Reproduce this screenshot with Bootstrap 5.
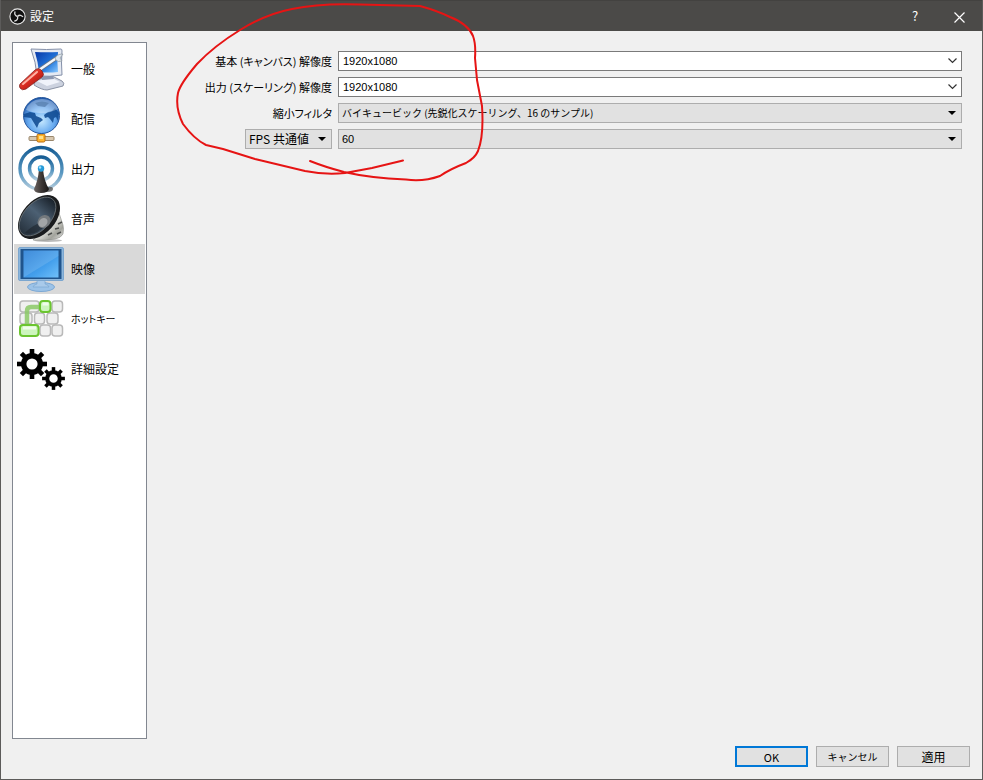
<!DOCTYPE html>
<html lang="ja">
<head>
<meta charset="utf-8">
<meta name="viewport" content="width=device-width, initial-scale=1">
<title>設定</title>
<link rel="stylesheet" href="https://cdn.jsdelivr.net/npm/bootstrap@5.3.0/dist/css/bootstrap.min.css">
<style>
  body { font: 12px/16px "Noto Sans CJK JP", sans-serif; font-feature-settings: "palt"; color: #000; background: #f0f0f0; }
  .window { border: 1px solid #5c5b5a; border-top-width: 0; }
  .titlebar { height: 31px; background: #4b4a48; color: #fff; padding: 0 7px 0 8px; border-top: 1px solid #434240; }
  .title-btn { width: 32px; height: 30px; color: #fff; background: none; border: 0; padding: 0; font-size: 13px; }
  .content-area { padding: 11px 20px 7px 11px; }
  .side { width: 135px; background: #fff; border: 1px solid #828790; padding: 1px; }
  .side .nav-link { height: 50px; padding: 0 0 0 3px; color: #000; border-radius: 0; gap: 6px; font-size: 12px; }
  .side .nav-link.active { background: #d9d9d9; color: #000; }
  .side svg { width: 48px; height: 48px; flex: none; }
  .kana { font-size: 10px; }
  .settings-grid { display: grid; grid-template-columns: 175px 1fr; gap: 6px; padding: 9px 0 0 10px; align-content: start; }
  .settings-grid > label { text-align: right; font-size: 11px; line-height: 20px; white-space: nowrap; }
  .combo { height: 20px; background: #fff; border: 1px solid #7a7a7a; }
  .combo input { border: 0; background: none; outline: 0; padding: 0 0 0 4px; font: 11px/16px "Liberation Sans", sans-serif; color: #000; }
  .combo button { border: 0; background: none; padding: 0; width: 17px; }
  .settings-grid .form-select { height: 20px; padding: 0 16px 0 3px; border: 1px solid #adadad; border-radius: 0; color: #000; font-size: 12px; line-height: 18px; background-color: #e1e1e1; background-size: 8px 4px; background-position: right 5px center;
    background-image: url("data:image/svg+xml,%3Csvg xmlns='http://www.w3.org/2000/svg' viewBox='0 0 8 4'%3E%3Cpath d='M0 0h8L4 4z'/%3E%3C/svg%3E"); }
  .settings-grid .fps-type { width: 87px; }
  .settings-grid .fps-value { font-family: "Liberation Sans", sans-serif; font-size: 11px; }
  .settings-grid .form-select.kana { font-size: 10px; }
  .actions { gap: 8px; padding: 0 12px 12px 0; }
  .actions .btn { width: 73px; height: 21px; padding: 0; border: 1px solid #adadad; border-radius: 0; background: #e1e1e1; color: #000; font-size: 12px; line-height: 18px; }
  .actions .btn.main { border: 2px solid #0078d7; line-height: 16px; font-size: 11px; }
  .actions .btn.kana { font-size: 10px; }
  .ink { position: absolute; left: 170px; top: 0; pointer-events: none; }
</style>
<script src="https://cdn.jsdelivr.net/npm/bootstrap@5.3.0/dist/js/bootstrap.bundle.min.js"></script>
</head>
<body>
<div class="window d-flex flex-column min-vh-100">
  <header class="titlebar d-flex align-items-center">
    <svg width="17" height="17" viewBox="0 0 17 17" aria-hidden="true"><circle cx="8.500" cy="8.500" r="7.600" fill="#111" stroke="#e8e8e8" stroke-width="1.100"/><g fill="none" stroke="#ddd" stroke-width="1.300"><path d="M8.500 8.500C6 8 5 5.500 6.200 3.500"/><path d="M8.500 8.500C6 8 5 5.500 6.200 3.500" transform="rotate(120 8.500 8.500)"/><path d="M8.500 8.500C6 8 5 5.500 6.200 3.500" transform="rotate(240 8.500 8.500)"/></g></svg>
    <span class="ms-1 me-auto">設定</span>
    <button type="button" class="title-btn me-2" aria-label="ヘルプ">?</button>
    <button type="button" class="title-btn ms-1" aria-label="閉じる"><svg width="11" height="11" viewBox="0 0 11 11"><path d="M.5.5l10 10M10.500.5l-10 10" stroke="#fff" stroke-width="1.200"/></svg></button>
  </header>

  <main class="content-area d-flex flex-grow-1">
    <nav class="side nav nav-pills flex-column flex-nowrap flex-shrink-0" aria-label="設定の種類">
      <a class="nav-link d-flex align-items-center" href="#general">
        <svg viewBox="0 0 48 48" aria-hidden="true"><defs><linearGradient id="scr" x2="1" y2="1"><stop stop-color="#0838a8"/><stop offset=".6" stop-color="#2378dc"/><stop offset="1" stop-color="#8bcaff"/></linearGradient><linearGradient id="red" x2="1" y2="1"><stop stop-color="#ff8a7a"/><stop offset=".5" stop-color="#d82a20"/><stop offset="1" stop-color="#8c100c"/></linearGradient></defs>
        <path d="M18 35l17-4 10 5q3 2 1 5l-16 4q-5 0-13-5z" fill="#ccd2df" stroke="#8b93a5"/><path d="M20 36l15-3 8 4-13 4z" fill="#f0f3fa"/><path d="M24 28h11l2 6-12 1z" fill="#8b97b0"/><path d="M14 4q16 1 30 0 1 0 1 2-1 12 0 24-12 2-25 1-1-14-6-27z" fill="#e4e9f2" stroke="#8490a9"/><path d="M18 7q12 .500 23 0-1 11 0 20-10 1-19 0-1-10-4-20z" fill="url(#scr)"/><path d="M22 25L41 12" stroke="#667588" stroke-width="4"/><path d="M22 25L41 12" stroke="#f5f7f9" stroke-width="2.400"/><path d="M38 14q1-5 8-5l-3 4 2 3q-4 2-7-2z" fill="#dde6ed" stroke="#8a949c" stroke-width=".7"/><path d="M3 39L18 25q4-3 7 1t0 6L9 44q-4 2-6-1-1-2 0-4z" fill="url(#red)" stroke="#84201e" stroke-width=".8"/><path d="M6 39L20 27" stroke="#ffb1a4" stroke-width="2" stroke-linecap="round"/></svg>
        <span>一般</span></a>
      <a class="nav-link d-flex align-items-center" href="#stream">
        <svg viewBox="0 0 48 48" aria-hidden="true"><defs><radialGradient id="sea" cx=".5" cy=".65" r=".65"><stop stop-color="#c6e9ff"/><stop offset=".55" stop-color="#67aaf0"/><stop offset="1" stop-color="#1851a4"/></radialGradient></defs>
        <path d="M24 35v8" stroke="#7a7f86" stroke-width="5"/><rect x="12" y="41.500" width="25" height="4" rx="1" fill="#d8c8b0" stroke="#99866b"/><rect x="20" y="39" width="8" height="8" rx="1.500" fill="#ffb52e" stroke="#b56a10"/><path d="M22 41h4v3h-4z" fill="#ffe08b"/><circle cx="24.500" cy="20.500" r="18" fill="url(#sea)" stroke="#27579c"/><path d="M18 8q7-3 14 0l-4 4-7-1zM7 19l6-2 5 1 1 3 5 2 2 2-4 3-2 5-3-5-3-5-7-1zM27 20l4-3 4-1 3-3 4 5-1 8-2-4-2 1-1 5-3-4-2-2-3 1z" fill="#124c94" opacity=".9"/><path d="M9 15Q12 5 24 4t17 10Q25 22 9 15z" fill="#fff" opacity=".32"/></svg>
        <span>配信</span></a>
      <a class="nav-link d-flex align-items-center" href="#output">
        <svg viewBox="0 0 48 48" aria-hidden="true"><defs><linearGradient id="wave" x2="0" y2="1"><stop stop-color="#175d94"/><stop offset=".6" stop-color="#5998c2"/><stop offset="1" stop-color="#b4ccdc"/></linearGradient><linearGradient id="mast"><stop stop-color="#6a6260"/><stop offset=".5" stop-color="#3c3735"/><stop offset="1" stop-color="#171514"/></linearGradient></defs><g fill="none" stroke="url(#wave)"><circle cx="24" cy="23.500" r="21" stroke-width="3.400"/><circle cx="24" cy="23.500" r="11.500" stroke-width="3.400"/></g><path d="M25 46l5-4q6-1 6 2t-6 3z" fill="#555" opacity=".8"/><path d="M22 24h4q1 12 6 20-1 4-8 4t-7-4q4-8 5-20z" fill="url(#mast)"/><circle cx="24" cy="23.500" r="3.200" fill="#279bd9"/><circle cx="23" cy="22.500" r="1.200" fill="#a5e2ff"/></svg>
        <span>出力</span></a>
      <a class="nav-link d-flex align-items-center" href="#audio">
        <svg viewBox="0 0 48 48" aria-hidden="true"><defs><linearGradient id="cone"><stop stop-color="#26313c"/><stop offset=".55" stop-color="#4c6073"/><stop offset="1" stop-color="#182029"/></linearGradient><linearGradient id="steel" x2="1" y2="1"><stop stop-color="#777"/><stop offset=".45" stop-color="#f1f1ec"/><stop offset=".75" stop-color="#a2a39c"/><stop offset="1" stop-color="#eee"/></linearGradient></defs><ellipse cx="31" cy="45.500" rx="14" ry="1.500" fill="#bbb"/><path d="M16 45L42 18l4 12q1 4 0 9-2 4-8 5-10 2-22 1z" fill="url(#steel)" stroke="#8a8c87" stroke-width=".6"/><path d="M41 29l4-2M38 34l4-1M31 40l4-2M40 39l4-2" stroke="#4a4c4a" stroke-width="1.600"/><ellipse cx="22" cy="22" rx="25.500" ry="16.500" transform="rotate(-48 22 22)" fill="#1a1c1e"/><ellipse cx="20.500" cy="21.500" rx="23" ry="13.500" transform="rotate(-48 20.500 21.500)" fill="url(#cone)" stroke="#6e7578" stroke-width=".8"/><path d="M22 28Q12 33 8 38q10 3 20-7z" fill="#171e24" opacity=".5"/><ellipse cx="27" cy="26.500" rx="7" ry="6" transform="rotate(-45 27 26.500)" fill="#74797d"/><ellipse cx="26" cy="27.500" rx="5" ry="4" transform="rotate(-45 26 27.500)" fill="#a2a5a7"/></svg>
        <span>音声</span></a>
      <a class="nav-link active d-flex align-items-center" href="#video" aria-current="page">
        <svg viewBox="0 0 48 48" aria-hidden="true"><defs><linearGradient id="lcd" x2="1" y2="1"><stop stop-color="#237bd5"/><stop offset=".6" stop-color="#449fec"/><stop offset="1" stop-color="#70c0fa"/></linearGradient></defs><ellipse cx="24" cy="42" rx="13.500" ry="4.500" fill="#9cc3e8" stroke="#7ca8d4"/><path d="M20 34h8v5q4 1 4 3H16q0-2 4-3z" fill="#a9caea" stroke="#76a2cd" stroke-width=".6"/><rect x="1.500" y="2.500" width="45" height="33" rx="1.500" fill="#8bb6dd" stroke="#7ba6cf"/><rect x="3.500" y="4" width="41" height="30" fill="#20548c"/><rect x="6.500" y="5.500" width="35" height="27" fill="url(#lcd)"/><path d="M6.500 32.500L41.500 11V5.500h-35z" fill="#fff" opacity=".13"/></svg>
        <span>映像</span></a>
      <a class="nav-link d-flex align-items-center" href="#hotkeys">
        <svg viewBox="0 0 48 48" aria-hidden="true"><g fill="#f0f0f0" stroke="#b9b9b9" stroke-width="1.500"><rect x="3" y="6" width="19" height="11" rx="3"/><rect x="35" y="6" width="10.500" height="11" rx="3"/><rect x="3" y="18" width="12" height="11" rx="3"/><rect x="17.500" y="18" width="10" height="11" rx="3"/><rect x="30" y="18" width="11" height="11" rx="3"/><rect x="23" y="30" width="10.500" height="11" rx="3"/><rect x="35" y="30" width="10.500" height="11" rx="3"/></g><path d="M10 31V16q0-4 4-4h11" fill="none" stroke="#8bc966" stroke-width="4.500" opacity=".85"/><g fill="#cdf5bd" stroke="#6bc52f" stroke-width="2"><rect x="23" y="6" width="10.500" height="11" rx="3"/><rect x="3" y="30" width="18.500" height="11" rx="3"/></g><path d="M6 33h13M25.500 9h6" stroke="#effdea" stroke-width="3"/></svg>
        <span class="kana">ホットキー</span></a>
      <a class="nav-link d-flex align-items-center" href="#advanced">
        <svg viewBox="0 0 48 48" aria-hidden="true"><defs><path id="tooth" d="M-2.300-15h4.600v6h-4.600z"/><g id="gear"><circle r="8.300" fill="none" stroke="#000" stroke-width="5.400"/><use href="#tooth"/><use href="#tooth" transform="rotate(45)"/><use href="#tooth" transform="rotate(90)"/><use href="#tooth" transform="rotate(135)"/><use href="#tooth" transform="rotate(180)"/><use href="#tooth" transform="rotate(225)"/><use href="#tooth" transform="rotate(270)"/><use href="#tooth" transform="rotate(315)"/></g></defs><use href="#gear" transform="translate(15 19)"/><use href="#gear" transform="translate(36.500 33.500) scale(.76)"/></svg>
        <span>詳細設定</span></a>
    </nav>

    <form class="settings-grid flex-grow-1">
      <label for="base">基本 (キャンバス) 解像度</label>
      <div class="combo d-flex"><input class="flex-grow-1" id="base" type="text" value="1920x1080"><button type="button" class="d-flex align-items-center justify-content-center" aria-label="解像度の一覧"><svg width="9" height="6" viewBox="0 0 9 6"><path d="M.5.5l4 4 4-4" fill="none" stroke="#333" stroke-width="1.200"/></svg></button></div>
      <label for="scaled">出力 (スケーリング) 解像度</label>
      <div class="combo d-flex"><input class="flex-grow-1" id="scaled" type="text" value="1920x1080"><button type="button" class="d-flex align-items-center justify-content-center" aria-label="解像度の一覧"><svg width="9" height="6" viewBox="0 0 9 6"><path d="M.5.5l4 4 4-4" fill="none" stroke="#333" stroke-width="1.200"/></svg></button></div>
      <label for="filter">縮小フィルタ</label>
      <select class="form-select kana" id="filter"><option>バイキュービック (先鋭化スケーリング、16 のサンプル)</option></select>
      <select class="form-select fps-type ms-auto" aria-label="FPS の種類"><option>FPS 共通値</option></select>
      <select class="form-select fps-value" aria-label="FPS"><option>60</option></select>
    </form>
  </main>

  <footer class="actions d-flex justify-content-end">
    <button type="button" class="btn main">OK</button>
    <button type="button" class="btn kana">キャンセル</button>
    <button type="button" class="btn">適用</button>
  </footer>
</div>
<svg class="ink" width="330" height="190" viewBox="0 0 330 190" aria-hidden="true"><path d="M233 160.500L202 168 175 173Q155 175 135 171L85 159 53 149 36 145Q24 139 13 124 5 108 8 93 10 84 27 64 44 46 70 30 96 14 122 9 150 3 190 4.500L250 6Q268 11 280 17 298 24 303 36 306 44 305 58L307 80 312 106Q314 136 308 151 305 158 296 163 280 169 270 176 253 182 236 179.500 200 178 174 172 155 167 140 161" fill="none" stroke="#e61414" stroke-width="2" stroke-linecap="round" stroke-linejoin="round"/></svg>
</body>
</html>
